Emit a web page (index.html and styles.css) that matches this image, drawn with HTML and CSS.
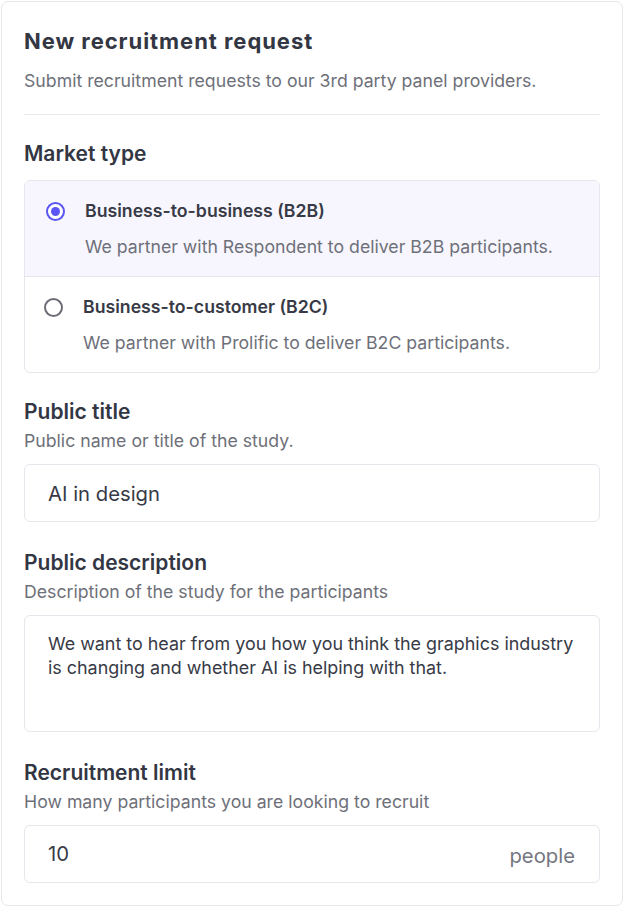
FILE: index.html
```html
<!DOCTYPE html>
<html lang="en">
<head>
<meta charset="utf-8">
<title>New recruitment request</title>
<link rel="stylesheet" href="styles.css">
</head>
<body>
<form class="card">
  <h1 class="title">New recruitment request</h1>
  <p class="subtitle">Submit recruitment requests to our 3rd party panel providers.</p>
  <hr class="divider">

  <h2 class="label label-market">Market type</h2>
  <div class="radio-group">
    <label class="option option-selected">
      <span class="option-head">
        <span class="radio radio-on"></span>
        <span class="option-title">Business-to-business (B2B)</span>
      </span>
      <span class="option-desc">We partner with Respondent to deliver B2B participants.</span>
    </label>
    <label class="option option-second">
      <span class="option-head">
        <span class="radio"></span>
        <span class="option-title">Business-to-customer (B2C)</span>
      </span>
      <span class="option-desc">We partner with Prolific to deliver B2C participants.</span>
    </label>
  </div>

  <h2 class="label">Public title</h2>
  <p class="help">Public name or title of the study.</p>
  <div class="input">AI in design</div>

  <h2 class="label label-gap">Public description</h2>
  <p class="help">Description of the study for the participants</p>
  <div class="textarea">We want to hear from you how you think the graphics industry is changing and whether AI is helping with that.</div>

  <h2 class="label label-gap">Recruitment limit</h2>
  <p class="help">How many participants you are looking to recruit</p>
  <div class="input input-suffix">
    <span class="value">10</span>
    <span class="suffix">people</span>
  </div>
</form>
</body>
</html>
```

FILE: styles.css
```css
* { box-sizing: border-box; }
html, body { margin: 0; padding: 0; background: #ffffff; }
body {
  font-family: Inter, "Noto Sans", "Liberation Sans", sans-serif;
  color: #333643;
}
.card {
  margin: 1px 2px 2px 1px;
  height: 905px;
  border: 1px solid #e6e6ec;
  border-radius: 7px;
  padding: 25px 22px 20px 22px;
  display: flex;
  flex-direction: column;
}
.title {
  margin: 0;
  font-size: 22px;
  line-height: 28px;
  font-weight: 700;
  color: #333643;
  letter-spacing: 0.95px;
}
.subtitle {
  margin: 15px 0 0 0;
  font-size: 17.7px;
  line-height: 22px;
  color: #6e7079;
}
.divider {
  margin: 22px 0 0 0;
  border: 0;
  height: 1px;
  background: #e8e8ee;
}
.label {
  margin: 26px 0 0 0;
  font-size: 21px;
  line-height: 26px;
  font-weight: 600;
  color: #333643;
}
.label-gap { margin-top: 28px; }
.help {
  margin: 5px 0 0 0;
  font-size: 17.7px;
  line-height: 22px;
  color: #6e7079;
}
.radio-group {
  margin-top: 13px;
  border: 1px solid #e6e6ec;
  border-radius: 6px;
  overflow: hidden;
  display: flex;
  flex-direction: column;
}
.option {
  display: flex;
  flex-direction: column;
  gap: 14px;
  padding: 19px 22px 18px 21px;
}
.option-selected { background: #f7f6fe; }
.option-second {
  border-top: 1px solid #e6e6ec;
  padding: 19px 22px 18px 19px;
}
.option-head {
  display: flex;
  align-items: center;
  gap: 20px;
}
.radio {
  width: 19px;
  height: 19px;
  border-radius: 50%;
  border: 2px solid #6c6c76;
  flex: none;
  position: relative;
  background: #fff;
}
.radio-on {
  border-color: #5a55f4;
}
.radio-on::after {
  content: "";
  position: absolute;
  left: 50%;
  top: 50%;
  width: 9px;
  height: 9px;
  margin: -4.5px 0 0 -4.5px;
  border-radius: 50%;
  background: #5a55f4;
}
.option-title {
  font-size: 17.7px;
  line-height: 22px;
  font-weight: 600;
  color: #383a46;
}
.option-desc {
  font-size: 17.7px;
  line-height: 22px;
  color: #6e7079;
  padding-left: 39px;
}
.input {
  margin-top: 12px;
  height: 58px;
  border: 1px solid #e6e6ec;
  border-radius: 6px;
  padding: 0 24px 0 23px;
  display: flex;
  align-items: center;
  font-size: 20.3px;
  color: #383a46;
}
.input-suffix {
  justify-content: space-between;
}
.input-suffix .value { margin-top: -1px; }
.suffix {
  color: #74767f;
  margin-top: 3px;
}
.textarea {
  margin-top: 12px;
  height: 117px;
  border: 1px solid #e6e6ec;
  border-radius: 6px;
  padding: 16px 24px 0 23px;
  font-size: 17.9px;
  line-height: 24px;
  color: #383a46;
}
```
